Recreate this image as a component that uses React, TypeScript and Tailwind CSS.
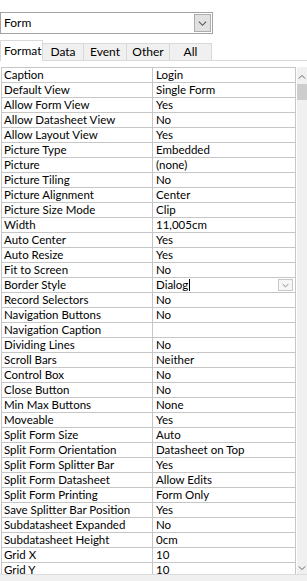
import React from "react";

const rows: [string, string][] = [
  ["Caption", "Login"],
  ["Default View", "Single Form"],
  ["Allow Form View", "Yes"],
  ["Allow Datasheet View", "No"],
  ["Allow Layout View", "Yes"],
  ["Picture Type", "Embedded"],
  ["Picture", "(none)"],
  ["Picture Tiling", "No"],
  ["Picture Alignment", "Center"],
  ["Picture Size Mode", "Clip"],
  ["Width", "11,005cm"],
  ["Auto Center", "Yes"],
  ["Auto Resize", "Yes"],
  ["Fit to Screen", "No"],
  ["Border Style", "Dialog"],
  ["Record Selectors", "No"],
  ["Navigation Buttons", "No"],
  ["Navigation Caption", ""],
  ["Dividing Lines", "No"],
  ["Scroll Bars", "Neither"],
  ["Control Box", "No"],
  ["Close Button", "No"],
  ["Min Max Buttons", "None"],
  ["Moveable", "Yes"],
  ["Split Form Size", "Auto"],
  ["Split Form Orientation", "Datasheet on Top"],
  ["Split Form Splitter Bar", "Yes"],
  ["Split Form Datasheet", "Allow Edits"],
  ["Split Form Printing", "Form Only"],
  ["Save Splitter Bar Position", "Yes"],
  ["Subdatasheet Expanded", "No"],
  ["Subdatasheet Height", "0cm"],
  ["Grid X", "10"],
  ["Grid Y", "10"],
];

const tabs = ["Data", "Event", "Other", "All"];
const tabWidths = ["w-[41px]", "w-[43px]", "w-[43px]", "w-[42px]"];

function Chevron({ size = 9, color = "#606060", up = false }: { size?: number; color?: string; up?: boolean }) {
  return (
    <svg width={size} height={size} viewBox="0 0 10 10">
      <path d={up ? "M1 7 L5 3 L9 7" : "M1 3 L5 7 L9 3"} fill="none" stroke={color} strokeWidth="1.2" />
    </svg>
  );
}

export default function App() {
  return (
    <div
      className="w-[307px] h-[581px] bg-white overflow-hidden flex flex-col text-[11.5px] leading-none text-black"
      style={{ fontFamily: 'Lato, "Noto Sans", sans-serif' }}
    >
      {/* selector combo */}
      <div className="mt-[12px] w-[213px] h-[22px] border border-[#a3a3a3] flex items-center text-[12px]">
        <span className="pl-[3px]">Form</span>
        <div className="ml-auto mr-[1px] w-[17px] h-[18px] bg-[#e1e1e1] border border-[#adadad] flex items-center justify-center">
          <Chevron size={9} color="#555" />
        </div>
      </div>

      {/* tabs */}
      <div className="mt-[5px] h-[21px] flex items-end text-[12px]">
        <div className="w-[43px] h-[21px] bg-white border border-b-0 border-[#d9d9d9] flex items-center pl-[3px] -mb-px z-10 relative">
          Format
        </div>
        {tabs.map((t, i) => (
          <div
            key={t}
            className={`${tabWidths[i]} h-[17px] bg-[#f0f0f0] border border-l-0 border-b-0 border-[#d9d9d9] flex items-center justify-center`}
          >
            {t}
          </div>
        ))}
        <div className="flex-1" />
      </div>
      <div className="h-px bg-[#d9d9d9]" />

      {/* property grid */}
      <div className="mt-[6px] flex flex-1 min-h-0">
        <div className="w-[296px] border-t border-l border-r border-[#c6c6c6] ml-px">
          {rows.map(([k, v]) => (
            <div key={k} className="h-[15px] flex border-b border-[#c6c6c6]">
              <div className="w-[151px] border-r border-[#c6c6c6] pl-[2px] flex items-center whitespace-nowrap">{k}</div>
              <div className="flex-1 pl-[3px] flex items-center whitespace-nowrap">
                {v}
                {k === "Border Style" && (
                  <>
                    <span className="w-px h-[12px] bg-black ml-px" />
                    <span className="ml-auto mr-[2px] w-[15px] h-[12px] border border-[#c8c8c8] bg-[#f6f6f6] flex items-center justify-center">
                      <Chevron size={7} color="#777" />
                    </span>
                  </>
                )}
              </div>
            </div>
          ))}
        </div>
        <div className="ml-px w-[10px] bg-[#f0f0f0] flex flex-col items-center">
          <div className="mt-[5px] h-[9px] flex items-center">
            <Chevron size={8} color="#606060" up />
          </div>
          <div className="mt-[3px] w-full h-[16px] bg-[#cdcdcd]" />
          <div className="flex-1" />
          <div className="mb-[2px] h-[9px] flex items-center">
            <Chevron size={8} color="#606060" />
          </div>
        </div>
      </div>
      <div className="h-[7px] bg-[#f0f0f0] border-t border-[#dcdcdc]" />
    </div>
  );
}
